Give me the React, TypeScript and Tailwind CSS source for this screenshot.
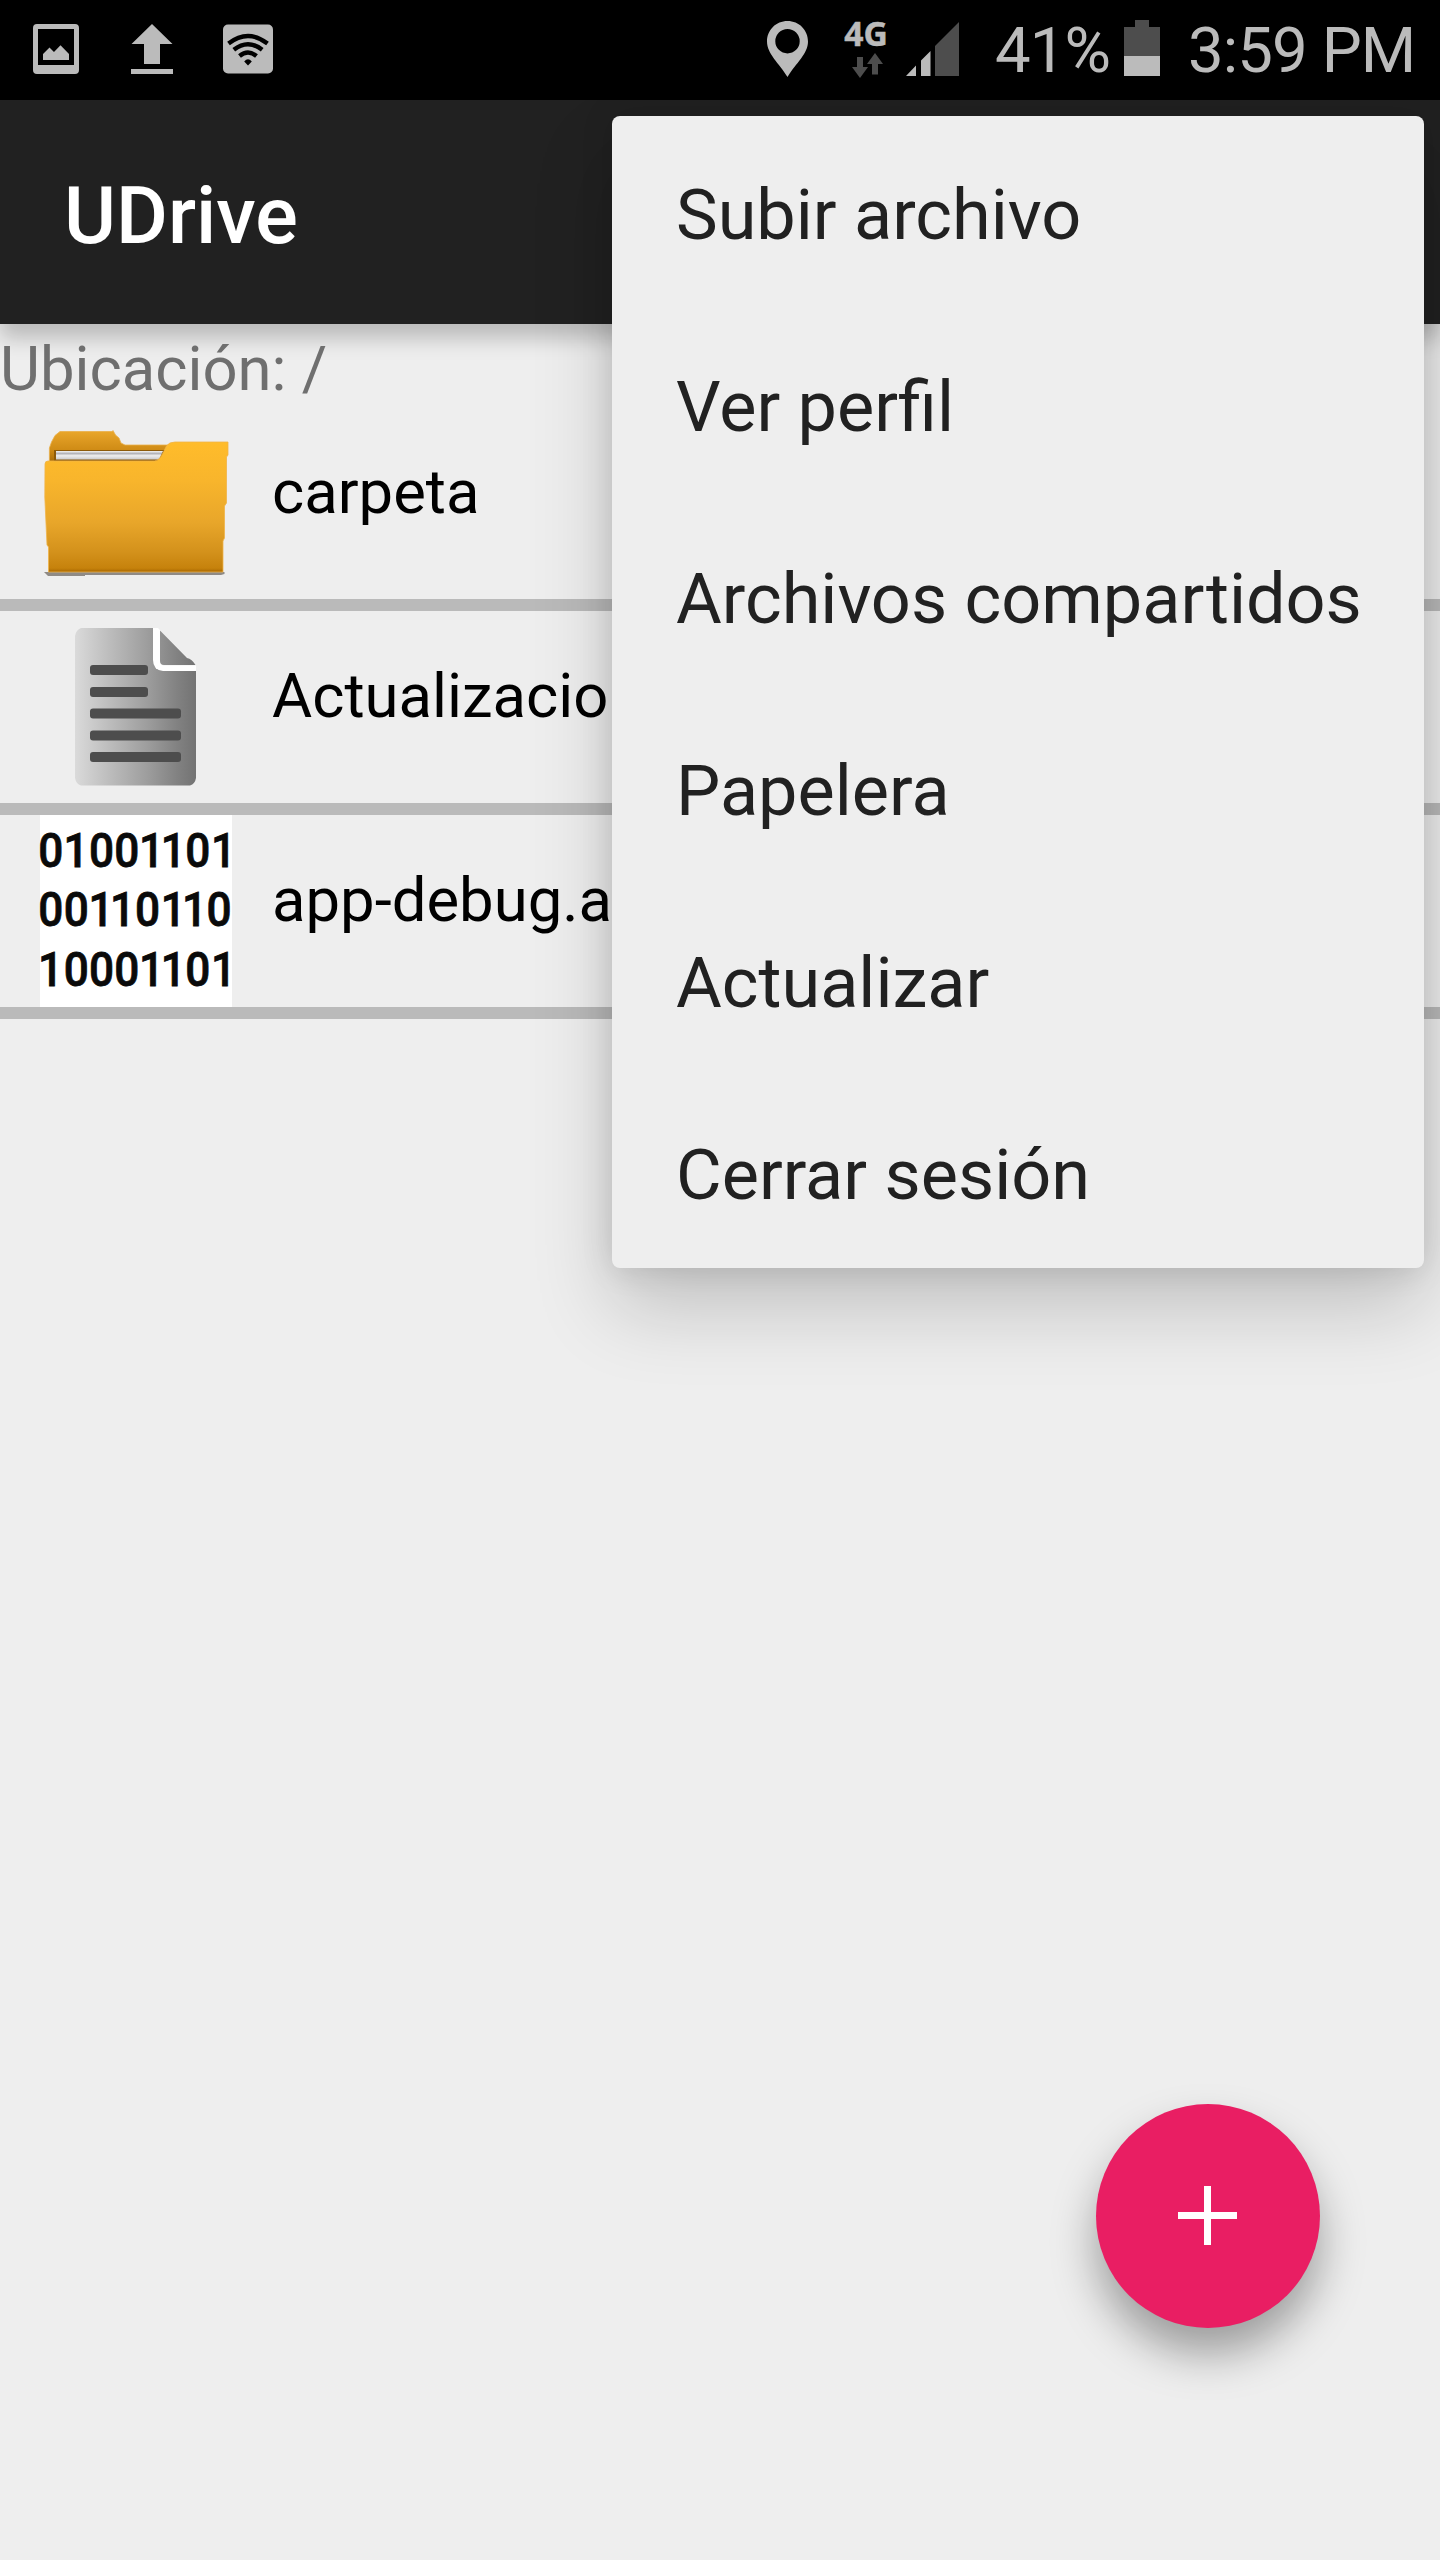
import React from "react";

const menuItems = [
  "Subir archivo",
  "Ver perfil",
  "Archivos compartidos",
  "Papelera",
  "Actualizar",
  "Cerrar sesión",
];

function StatusBar() {
  return (
    <div className="flex h-[100px] bg-black text-[63.5px] leading-[100px] tracking-[-0.9px] text-[#bbbbbb]">
      <svg className="ml-[33px] h-[100px] w-[46px] shrink-0" viewBox="33 0 46 100" fill="#bbbbbb">
        <path fillRule="evenodd" d="M37 24H75a4 4 0 0 1 4 4V70a4 4 0 0 1-4 4H37a4 4 0 0 1-4-4V28a4 4 0 0 1 4-4ZM38 29V65H74V29Z" />
        <path d="M43 60V54L49.500 47.500L54 52L60.500 45.300L69 54V60Z" />
      </svg>
      <svg className="ml-[52px] h-[100px] w-[42px] shrink-0" viewBox="131 0 42 100" fill="#bbbbbb">
        <path d="M152 24L172.500 44H160V64H144V44H131.500ZM131 69H173V74H131Z" />
      </svg>
      <svg className="ml-[50px] h-[100px] w-[50px] shrink-0" viewBox="223 0 50 100">
        <rect x="223" y="24.500" width="50" height="49" rx="5" fill="#bbbbbb" />
        <g fill="none" stroke="#000" strokeWidth="4.400">
          <path d="M228.500 43.500Q248 28.500 267.500 43.500" />
          <path d="M233.800 49.800Q248 38.500 262.200 49.800" />
          <path d="M239.500 56Q248 49 256.500 56" />
        </g>
        <path d="M244.200 61.500Q248 57 251.800 61.500L248 65.500Z" />
      </svg>
      <svg className="ml-[494px] h-[100px] w-[41px] shrink-0" viewBox="767 0 41 100" fill="#bbbbbb">
        <path fillRule="evenodd" d="M787.500 21C799 21 808 30 808 41.500C808 54 796 63 787.500 77C779 63 767 54 767 41.500C767 30 776 21 787.500 21ZM787.500 29a12.200 12.200 0 1 0 0 24.400a12.200 12.200 0 1 0 0-24.400Z" />
      </svg>
      <svg className="ml-[36px] h-[100px] w-[44px] shrink-0" viewBox="844 0 44 100">
        <text x="844.300" y="46.300" letterSpacing="0" fill="#bbbbbb" stroke="#bbbbbb" strokeWidth="0.500" fontFamily="Open Sans" fontWeight="700" fontSize="34" textLength="43.600" lengthAdjust="spacingAndGlyphs">4G</text>
        <path fill="#4d4d4d" d="M857 57H863V67H868L860 78L852 67H857ZM875 53L883 64H878V74.500H872V64H867Z" />
      </svg>
      <svg className="ml-[18px] h-[100px] w-[53px] shrink-0" viewBox="906 0 53 100">
        <path fill="#bbbbbb" d="M906 76L916 65.500V76ZM921 76V60.500L930.500 51V76Z" />
        <path fill="#4d4d4d" d="M935 76V46L959 22V76Z" />
      </svg>
      <span className="ml-[36px] w-[115px] shrink-0 whitespace-nowrap pt-px">41%</span>
      <svg className="ml-[14px] h-[100px] w-[36px] shrink-0" viewBox="1124 0 36 100">
        <path fill="#4d4d4d" d="M1124 27H1135V20H1149V27H1160V56H1124Z" />
        <path fill="#bbbbbb" d="M1124 56H1160V76H1124Z" />
      </svg>
      <span className="ml-[28px] shrink-0 whitespace-nowrap pt-px">3:59 PM</span>
    </div>
  );
}

function FolderIcon() {
  return (
    <svg className="h-[192px] w-[192px] shrink-0" viewBox="40 407 192 192">
      <defs>
        <linearGradient id="folderFront" x1="0" y1="0" x2="0" y2="1">
          <stop offset="0" stopColor="#ffbc2b" />
          <stop offset="0.300" stopColor="#f8b52c" />
          <stop offset="0.620" stopColor="#e8a62a" />
          <stop offset="0.850" stopColor="#d3911b" />
          <stop offset="0.970" stopColor="#c6820c" />
          <stop offset="1" stopColor="#a96800" />
        </linearGradient>
        <linearGradient id="folderBack" x1="0" y1="0" x2="0" y2="1">
          <stop offset="0" stopColor="#eaa72b" />
          <stop offset="0.600" stopColor="#d08c16" />
          <stop offset="1" stopColor="#a76b08" />
        </linearGradient>
        <linearGradient id="folderPaper" x1="0" y1="0" x2="0" y2="1">
          <stop offset="0" stopColor="#f5f5f5" />
          <stop offset="0.300" stopColor="#b3b3b8" />
          <stop offset="0.550" stopColor="#eeeeee" />
          <stop offset="1" stopColor="#c9c9cc" />
        </linearGradient>
      </defs>
      <path fill="#77706a" opacity="0.800" d="M44 572H224.500V574L221 575H85V576H48Z" />
      <path fill="url(#folderBack)" stroke="#eab04a" strokeWidth="0.800" d="M49.400 462V448L51.500 442L55 435.500L60 431.500H112L113 430.500L115.500 435L119 438L121 443L125 445H170V462Z" />
      <path fill="#8c5a0a" d="M54 450H166V461H54Z" />
      <path fill="url(#folderPaper)" d="M56 451H163L159 459.500H56Z" />
      <path fill="url(#folderFront)" stroke="#f0b449" strokeWidth="0.800" d="M45 464Q45 461 48 461H155Q160 460 163 453L166.500 446Q169 442 175 442H228V455L226.500 457V503L224.500 506V538L223 541V572H48.500V547L47 545L44.800 497Z" />
    </svg>
  );
}

function DocumentIcon() {
  return (
    <svg className="h-[192px] w-[192px] shrink-0" viewBox="40 611 192 192">
      <defs>
        <linearGradient id="sheet" gradientUnits="userSpaceOnUse" x1="75" y1="0" x2="196" y2="0">
          <stop offset="0" stopColor="#dadada" />
          <stop offset="0.250" stopColor="#c0c0c0" />
          <stop offset="0.600" stopColor="#9d9d9d" />
          <stop offset="0.850" stopColor="#818181" />
          <stop offset="1" stopColor="#737373" />
        </linearGradient>
      </defs>
      <path fill="url(#sheet)" d="M81 628H156V669H196V778Q195 784 190 785.500H81Q76 784 75 778V636Q76 630 81 628Z" />
      <path fill="#fff" d="M153 628H158L161 631V661Q161 665.500 164 665.500H196V671H163Q153 670 153 660Z" />
      <path fill="url(#sheet)" d="M160 630.500L187 658Q192 659 195.500 665H164Q160 665 160 661Z" />
      <g fill="#4d4d4d">
        <rect x="90" y="665" width="58" height="10" rx="3" />
        <rect x="90" y="687" width="58" height="10" rx="3" />
        <rect x="90" y="708.500" width="91" height="10" rx="3" />
        <rect x="90" y="730.500" width="91" height="10" rx="3" />
        <rect x="90" y="752" width="91" height="10" rx="3" />
      </g>
    </svg>
  );
}

function BinaryIcon() {
  return (
    <svg className="h-[192px] w-[192px] shrink-0 overflow-visible bg-white" viewBox="0 0 192 192">
      <g transform="scale(0.92 1)" fontFamily="Roboto" fontWeight="500" fontSize="48" fill="#0a0a0a" stroke="#0a0a0a" strokeWidth="0.800">
        <text x="-1.8 25.6 53.2 80.7 107.6 131.2 157.9 186" y="52">01001101</text>
        <text x="-1.8 25.7 52.6 76.2 103.3 131.2 154.300 181" y="111.500">00110110</text>
        <text x="-2.300 25.7 53.2 80.7 107.6 131.2 157.9 186" y="171">10001101</text>
      </g>
    </svg>
  );
}

const files = [
  { name: "carpeta", icon: <FolderIcon /> },
  { name: "Actualizacio", icon: <DocumentIcon /> },
  { name: "app-debug.apk", icon: <BinaryIcon /> },
];

export default function App() {
  return (
    <div className="relative h-[2560px] w-[1440px] overflow-hidden bg-[#eeeeee] font-['Roboto',sans-serif]">
      <StatusBar />
      <header className="relative flex h-[224px] items-center bg-[#212121] pl-16 pt-2 shadow-[0_14px_20px_rgba(0,0,0,0.220)]">
        <h1 className="text-[79.5px] font-medium leading-[94px] text-white">UDrive</h1>
      </header>
      <p className="relative h-[83px] text-[61.6px] leading-[90px] text-[#6f6f6f]">Ubicación: /</p>
      <ul>
        {files.map((f) => (
          <li key={f.name} className="flex h-[204px] border-b-[12px] border-[#bababa] pl-10">
            {f.icon}
            <span className="ml-10 pt-[49px] text-[61.6px] leading-[72px] text-black">{f.name}</span>
          </li>
        ))}
      </ul>

      <nav className="absolute right-4 top-[116px] w-[812px] rounded-lg bg-[#eeeeee] shadow-[0_0_32px_rgba(0,0,0,0.130),0_40px_80px_rgba(0,0,0,0.190)]">
        {menuItems.map((item) => (
          <button key={item} className="flex h-48 w-full items-center whitespace-nowrap pl-16 pt-1.5 text-[70.2px] leading-[82px] text-[#212121]">
            {item}
          </button>
        ))}
      </nav>

      <button
        aria-label="Agregar"
        className="absolute left-[1096px] top-[2104px] flex size-[224px] items-center justify-center rounded-full bg-[#e91e63] pb-px pr-px shadow-[0_26px_44px_rgba(0,0,0,0.340)]"
      >
        <svg className="size-[59px]" viewBox="0 0 59 59" fill="#fff">
          <path d="M26 0H33V26H59V33H33V59H26V33H0V26H26Z" />
        </svg>
      </button>
    </div>
  );
}
